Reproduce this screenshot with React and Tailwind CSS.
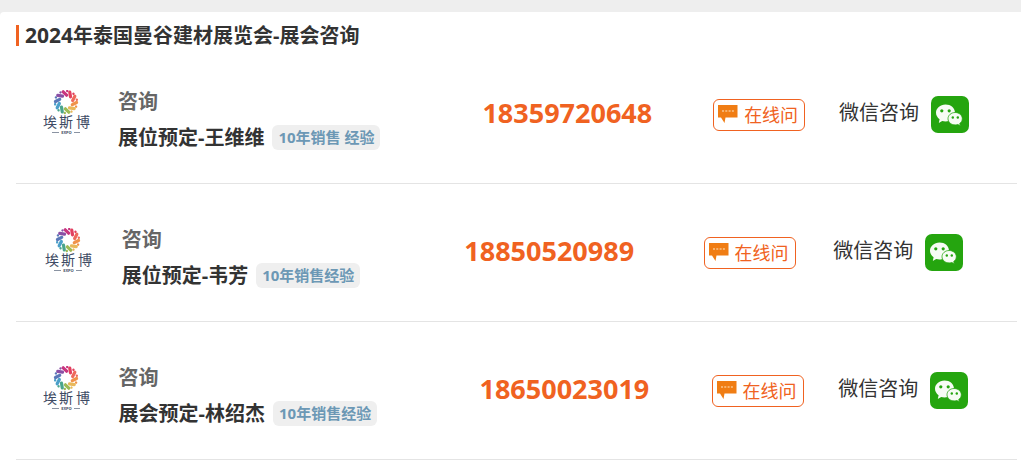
const contacts = [
  { name: "展位预定-王维维", tag: "10年销售 经验", phone: "18359720648" },
  { name: "展位预定-韦芳", tag: "10年销售经验", phone: "18850520989" },
  { name: "展会预定-林绍杰", tag: "10年销售经验", phone: "18650023019" },
];

const petals = [
  "#c8357f",
  "#e2405f",
  "#ee6a5c",
  "#f0924a",
  "#e9b85a",
  "#9dbb55",
  "#4aa58c",
  "#4a9fc9",
  "#5a78b8",
  "#8a4fa5",
];

function ExpoLogo() {
  return (
    <svg width="48" height="46" viewBox="0 0 48 46" role="img" aria-label="埃斯博 EXPO">
      <g transform="translate(23 12)">
        {petals.map((color, i) => (
          <g key={color} transform={`rotate(${i * 36})`}>
            <path d="M-2.8 -10.2 L0.6 -6.8" stroke={color} strokeWidth="3.200" strokeLinecap="round" />
            <circle cx="1.2" cy="-11" r="1.2" fill={color} />
          </g>
        ))}
      </g>
      <g fill="#3d4a63" fontFamily="'Noto Sans CJK SC', sans-serif" fontSize="14">
        <text x="0" y="37">埃</text>
        <text x="16" y="37">斯</text>
        <text x="33" y="37">博</text>
      </g>
      <path d="M9 42.500h7M31 42.500h6" stroke="#8a93a2" strokeWidth="1" />
      <text x="23.5" y="44" textAnchor="middle" fill="#3d4a63" fontFamily="'Open Sans', sans-serif" fontWeight="700" fontSize="4">
        EXPO
      </text>
    </svg>
  );
}

function ChatIcon() {
  return (
    <svg width="20" height="20" viewBox="0 0 20 20" aria-hidden="true">
      <path d="M0 0h19.500v12.500H7.500L6.500 18 3 12.500H0z" fill="#f07d14" />
      <path d="M4 6h12" stroke="#f9c48c" strokeWidth="1.500" strokeDasharray="2 1.300" />
    </svg>
  );
}

function WechatIcon() {
  return (
    <svg width="38" height="37" viewBox="0 0 38 37" role="img" aria-label="微信">
      <rect width="38" height="37" rx="7" fill="#25a50f" />
      <path
        d="M14.500 8.500C9.200 8.500 5 12.200 5 16.800c0 2.600 1.400 4.900 3.600 6.400L7.800 27l3.400-2c1 .3 2.100.5 3.300.5 5.300 0 9.500-3.900 9.500-8.700s-4.200-8.300-9.500-8.300z"
        fill="#f7fcf5"
      />
      <path
        d="M24.200 16.500c-4 0-7.200 2.700-7.200 6.200s3.200 6.200 7.200 6.200c.9 0 1.800-.1 2.600-.4l2.600 1.300-.7-2.300c1.700-1.100 2.600-2.800 2.600-4.800 0-3.400-3.100-6.200-7.100-6.200z"
        fill="#f7fcf5"
        stroke="#25a50f"
        strokeWidth="0.800"
      />
      <g fill="#25a50f">
        <circle cx="10.800" cy="14.800" r="1.600" />
        <circle cx="18.200" cy="14.800" r="1.600" />
        <circle cx="21.800" cy="21.500" r="1.200" />
        <circle cx="26.800" cy="21.500" r="1.200" />
      </g>
    </svg>
  );
}

function ContactRow({ name, tag, phone }) {
  return (
    <li className="flex h-[138px] items-center border-b border-[#e4e4e4] whitespace-nowrap">
      <div className="flex shrink-0 grow-4 basis-[98px] justify-center pb-1">
        <ExpoLogo />
      </div>
      <div className="grow-2 pt-2.5 pr-[100px] text-xl leading-9 font-bold">
        <p className="text-[#666]">咨询</p>
        <div className="flex items-center gap-2">
          <span className="text-[#333]">{name}</span>
          <span className="rounded-md bg-[#efefef] px-1.5 text-[15px] leading-[25px] text-[#6c98b5]">
            {tag}
          </span>
        </div>
      </div>
      <div className="grow-9 pr-[52px] pb-1">
        <a href={`tel:${phone}`} className="text-[27px] leading-9 font-bold text-[#f06221]">
          {phone}
        </a>
      </div>
      <div className="grow-4 pr-[30px]">
        <button
          type="button"
          className="flex h-8 items-center gap-1.5 rounded-md border border-[#f06221] pr-1.5 pl-1 text-lg leading-7 text-[#f06221]"
        >
          <ChatIcon />
          在线问
        </button>
      </div>
      <div className="flex grow-6 items-center gap-3 pr-[42px] text-xl text-[#333]">
        <span className="pb-1">微信咨询</span>
        <WechatIcon />
      </div>
    </li>
  );
}

export default function App() {
  return (
    <div className="min-h-screen bg-[#eee] pt-3 font-['Open_Sans','Noto_Sans_CJK_SC',sans-serif]">
      <section className="min-h-[458px] rounded-tl bg-white pt-[13px] pr-1 pl-4">
        <h2 className="border-l-3 border-[#f06221] pl-1.5 text-xl leading-5 font-bold text-[#333]">
          <span className="text-[21px]">2024</span>年泰国曼谷建材展览会-展会咨询
        </h2>
        <ul>
          {contacts.map((c) => (
            <ContactRow key={c.phone} {...c} />
          ))}
        </ul>
      </section>
    </div>
  );
}
